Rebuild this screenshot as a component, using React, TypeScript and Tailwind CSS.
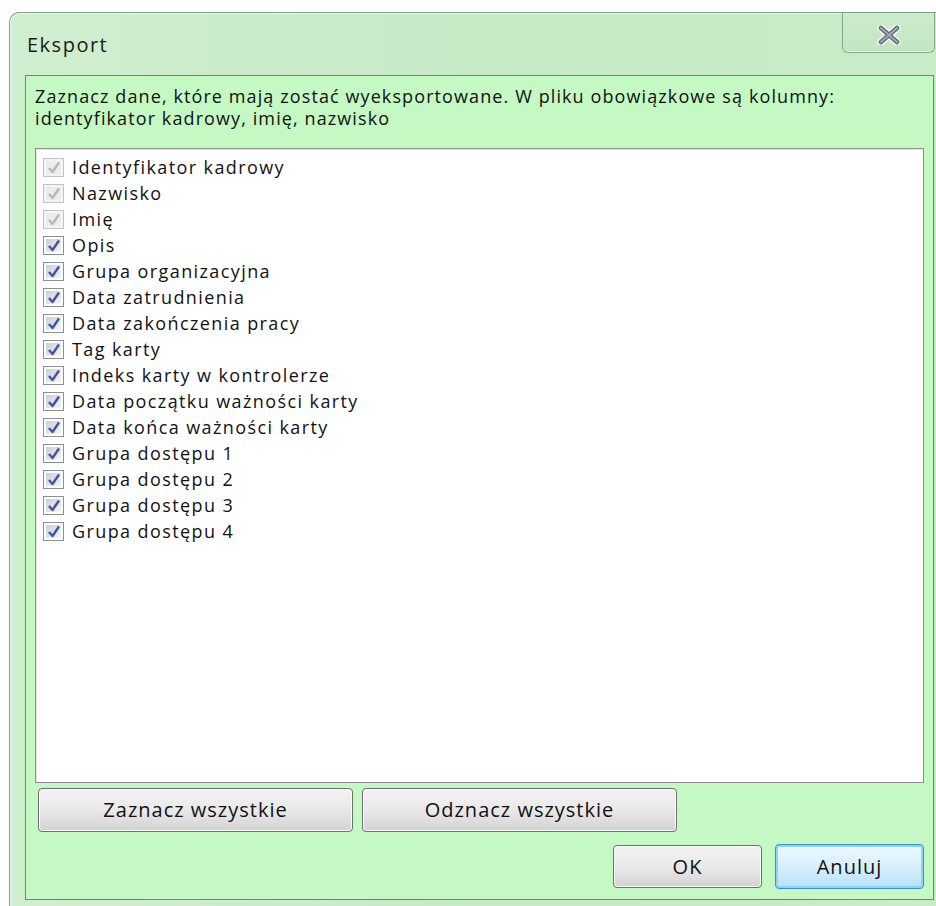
import React from "react";

type Column = { label: string; locked?: boolean };

const columns: Column[] = [
  { label: "Identyfikator kadrowy", locked: true },
  { label: "Nazwisko", locked: true },
  { label: "Imię", locked: true },
  { label: "Opis" },
  { label: "Grupa organizacyjna" },
  { label: "Data zatrudnienia" },
  { label: "Data zakończenia pracy" },
  { label: "Tag karty" },
  { label: "Indeks karty w kontrolerze" },
  { label: "Data początku ważności karty" },
  { label: "Data końca ważności karty" },
  { label: "Grupa dostępu 1" },
  { label: "Grupa dostępu 2" },
  { label: "Grupa dostępu 3" },
  { label: "Grupa dostępu 4" },
];

const font = { fontFamily: '"Open Sans", "Noto Sans", sans-serif' };

function CheckBox({ checked, disabled }: { checked: boolean; disabled?: boolean }) {
  return (
    <span
      className={
        "flex h-[19px] w-[21px] shrink-0 items-center justify-center border p-[2px] " +
        (disabled ? "border-[#c2c2c2] bg-[#f4f4f4]" : "border-[#8e8f8f] bg-white")
      }
    >
      <span
        className={
          "flex h-full w-full items-center justify-center " +
          (disabled
            ? "bg-[#ececec]"
            : "bg-gradient-to-br from-[#cbcfd5] to-[#f6f6f6]")
        }
      >
        {checked && (
          <svg width="14" height="13" viewBox="0 0 14 13">
            <path
              d="M2 7 L5.5 11 L12 1.5"
              fill="none"
              stroke={disabled ? "#b8b8b8" : "#3d55a6"}
              strokeWidth="2.4"
              strokeLinejoin="round"
            />
          </svg>
        )}
      </span>
    </span>
  );
}

function WinButton({
  children,
  className,
  primary,
}: {
  children: React.ReactNode;
  className: string;
  primary?: boolean;
}) {
  return (
    <button
      className={
        "relative flex items-center justify-center rounded-[4px] border text-[20px] tracking-[1px] text-[#111] " +
        (primary
          ? "border-[#3c8fd0] bg-gradient-to-b from-[#eef8ff] via-[#d8effd] to-[#b9e1fb] shadow-[inset_0_0_0_2px_#8fd3f7] "
          : "border-[#707070] bg-gradient-to-b from-[#f3f3f3] via-[#e9e9e9] to-[#d3d3d3] shadow-[inset_0_0_0_1px_#fbfbfb] ") +
        className
      }
      style={font}
    >
      {children}
    </button>
  );
}

export default function App() {
  return (
    <div className="relative h-[906px] w-[936px] overflow-hidden bg-white">
      {/* dialog frame */}
      <div className="ml-[9px] mt-[12px] h-[910px] w-[940px] rounded-tl-[10px] border-l border-t border-[#7fa07f] bg-gradient-to-r from-[#d0efd0] via-[#c6e9c6] to-[#c8ebc8] pl-[15px] shadow-[inset_1px_1px_0_#eaf9ea]">
        {/* title bar */}
        <div className="relative h-[62px]">
          <div
            className="absolute left-[2px] top-[19px] text-[20px] leading-[26px] tracking-[1.5px] text-[#1b1b1b]"
            style={font}
          >
            Eksport
          </div>
          <div className="absolute left-[817px] top-0 flex h-[40px] w-[93px] items-center justify-center rounded-b-[6px] border border-t-0 border-[#8ea58e] bg-gradient-to-b from-[#cdeccd] to-[#c2e6c2] shadow-[inset_0_-1px_0_#e0f5e0]">
            <svg width="24" height="20" viewBox="0 0 24 20" className="mt-[5px]">
              <path
                d="M4 3 L20 17 M20 3 L4 17"
                stroke="#ffffff"
                strokeWidth="7"
                strokeLinecap="round"
              />
              <path
                d="M4 3 L20 17 M20 3 L4 17"
                stroke="#5f6470"
                strokeWidth="4.6"
                strokeLinecap="round"
              />
              <path
                d="M4 3 L20 17 M20 3 L4 17"
                stroke="#a3a8b0"
                strokeWidth="2.2"
                strokeLinecap="round"
              />
            </svg>
          </div>
        </div>

        {/* client area */}
        <div className="h-[825px] w-[909px] border border-[#7c7c7c] bg-[#c4f9c4] pl-[9px] pt-[9px]" style={font}>
          <div className="w-[900px] text-[18px] leading-[22px] tracking-[1.1px] text-[#111]">
            <div>Zaznacz dane, które mają zostać wyeksportowane. W pliku obowiązkowe są kolumny:</div>
            <div>identyfikator kadrowy, imię, nazwisko</div>
          </div>

          {/* column list */}
          <div className="mt-[19px] h-[635px] w-[889px] border border-[#8d8f8f] bg-white pl-[7px] pt-[5px] shadow-[inset_1px_1px_0_#e3e3e3]">
            {columns.map((c) => (
              <div key={c.label} className="flex h-[26px] items-center gap-[8px]">
                <CheckBox checked disabled={c.locked} />
                <span className="whitespace-nowrap text-[18px] leading-[26px] tracking-[1.4px] text-[#121212]">
                  {c.label}
                </span>
              </div>
            ))}
          </div>

          <div className="mt-[5px] flex gap-[9px] pl-[3px]">
            <WinButton className="h-[44px] w-[315px]">Zaznacz wszystkie</WinButton>
            <WinButton className="h-[44px] w-[315px]">Odznacz wszystkie</WinButton>
          </div>

          <div className="mt-[13px] flex w-[889px] justify-end gap-[13px]">
            <WinButton className="h-[43px] w-[149px]">OK</WinButton>
            <WinButton className="-mt-[1px] h-[45px] w-[149px]" primary>
              Anuluj
            </WinButton>
          </div>
        </div>
      </div>
    </div>
  );
}
